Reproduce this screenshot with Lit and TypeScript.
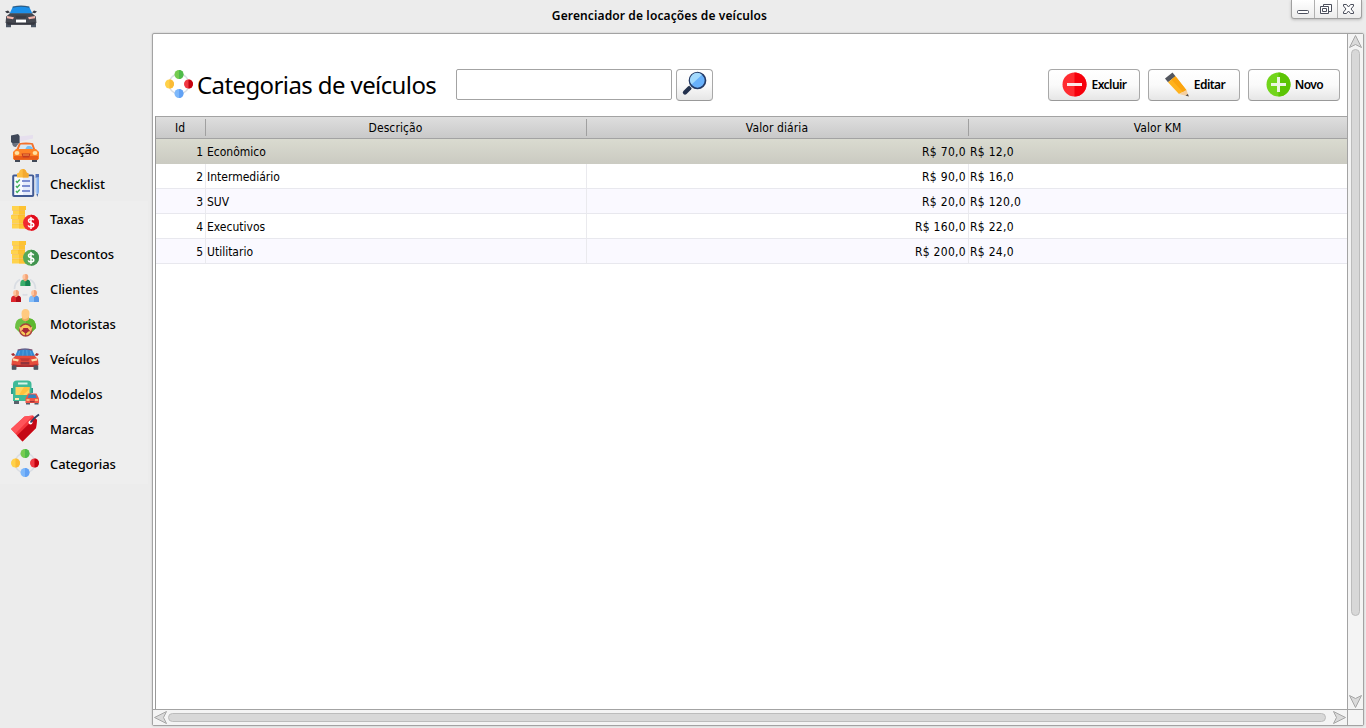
import { LitElement, html, svg, css } from "lit";
import { customElement, property } from "lit/decorators.js";

const carFront = (body: string, glass: string, dark: string, lamp: string) => svg`
  <path d="M1 20h5v6H1zM26 20h5v6h-5z" fill="#4b5563"/>
  <path d="M0 9.500l3-1 2 2.200-3 .8zM32 9.500l-3-1-2 2.200 3 .8z" fill="${dark}"/>
  <path d="M8 4.500Q16 2.600 24 4.500L27.500 12h-23z" fill="${glass}"/>
  <path d="M7.300 4.700Q16 2 24.700 4.700l-.6 1.100Q16 3.600 7.900 5.800z" fill="${dark}" opacity=".6"/>
  <path d="M5 11.400h22l3.800 3.400.6 6-1.400 2.400H2l-1.400-2.400.6-6z" fill="${body}"/>
  <path d="M1.500 20.500q14.500 2.500 29 0l-1.500 3H3z" fill="${dark}"/>
  <path d="M10 14h12l-2 3h-8z" fill="${dark}" opacity=".6"/>
  <path d="M2 14.200l7 1.300-1 2.200-6-1.200zM30 14.200l-7 1.300 1 2.200 6-1.200z" fill="${lamp}"/>`;

const coins = (c1: string, c2: string) => svg`<g transform="translate(0 2)">
  <path d="M1 0h14v4H1zM2 4.500h12v4H2zM0 9h14v4H0zM1 13.500h14v4H1zM1 18h14v4.500H1z" fill="#ffd34d"/>
  <path d="M8 0h7v4H8zM8 4.500h6v4H8zM7 9h7v4H7zM8 13.500h7v4H8zM8 18h7v4.500H8z" fill="#fdc233"/>
  <path d="M1 4h13v.7H1zM1 8.500h13v.7H1zM1 13h13v.7H1zM1 17.500h13v.7H1z" fill="#f6a623" opacity=".6"/>
  <circle cx="20" cy="16.800" r="8" fill="${c1}"/>
  <path d="M20 8.800a8 8 0 0 1 0 16z" fill="${c2}"/>
  <path d="M22.700 14.300q-.5-1.500-2.700-1.500-2.400 0-2.500 1.800 0 1.700 2.500 2.200 2.800.6 2.800 2.300 0 1.900-2.800 1.900-2.400 0-2.800-1.700M20 11v12" fill="none" stroke="#fff" stroke-width="1.500"/></g>`;

const person = (x: number, y: number, c1: string, c2: string) => svg`
  <g transform="translate(${x} ${y})">
    <path d="M0 12V9.500Q0 5.500 4 5.500h2q4 0 4 4V12z" fill="${c1}"/>
    <path d="M5 5.500h1q4 0 4 4V12H5z" fill="${c2}"/>
    <circle cx="5" cy="3" r="2.900" fill="#ffc39c"/>
    <path d="M5 .1a2.900 2.900 0 0 1 0 5.800z" fill="#f2a276"/>
    <path d="M3.500 5h3v1.600Q5 8 3.500 6.600z" fill="#f2a276"/>
  </g>`;

const icons: Record<string, unknown> = {
  appcar: svg`<g transform="translate(0 1.300) scale(1 .96)">${carFront("#454850", "#1c8fe8", "#34363f", "#f5b5ab")}<path d="M11 18h10v3H11z" fill="#fff"/></g>`,
  locacao: svg`
    <path d="M7.500 2.500L22 1v3.500l-13 3z" fill="#e6dfee"/>
    <path d="M0 1.500L7 0l1.600 2v7L2 10 0 8z" fill="#3f4858"/>
    <path d="M1 9.500q1 4 4 3.500l3-4z" fill="#69717f"/>
    <path d="M8.500 9.500h13l2.300 6H6.200z" fill="#d8e8f2"/>
    <path d="M8 9.200q7-1.300 14 0l2.200 6h-2l-1.800-4.700H9.600L7.800 15H5.600z" fill="#f4712b"/>
    <path d="M16 12.300a4.500 4.500 0 0 1 6.200 3h-8z" fill="#76bdf1"/>
    <path d="M4 24h5v4H4zM21 24h5v4h-5z" fill="#414957"/>
    <path d="M5 15h20l3 3v6.500l-1 1.300H3L2 24.500V18z" fill="#ff8427"/>
    <path d="M3 22h24v3.800H3z" fill="#e95c18"/>
    <ellipse cx="6" cy="19" rx="2.400" ry="2" fill="#ffe1a1"/><ellipse cx="24" cy="19" rx="2.400" ry="2" fill="#ffe1a1"/>
    <path d="M10.500 19.500h9l-1.300 4h-6.400z" fill="#c53b20"/><path d="M12 21h6" stroke="#f6a14a"/>`,
  checklist: svg`
    <rect x="2.200" y="6.400" width="20" height="20.600" rx=".8" fill="#f8faff" stroke="#415a93" stroke-width="2"/>
    <path d="M12 7.500h9v18.500h-9z" fill="#e6ecfb"/>
    <path d="M6 8.500V4.500L8 3.500Q8.500 0 11.700 0T15.500 3.500l2 1v4z" fill="#fdbd43"/><path d="M11.700 0Q15 0 15.500 3.500l2 1v4h-5.800z" fill="#f4a931"/>
    <path d="M5 12l1.200 1.400 2.600-2.800M5 17l1.200 1.400 2.600-2.800M5 22l1.200 1.400 2.600-2.800" fill="none" stroke="#43b05c" stroke-width="1.500"/>
    <path d="M11 12h8M11 17h8M11 22h8" stroke="#596fc3" stroke-width="1.600"/>
    <path d="M24.500 5H28v4h-3.500z" fill="#5573b8"/><path d="M24.500 8.600H28v14.200l-1.700 4.700-1.800-4.700z" fill="#a9c9f5"/><path d="M26.300 8.600H28v14.200l-1.700 4.700z" fill="#7daaea"/><path d="M25.500 25H27l-.7 3z" fill="#425b93"/>`,
  taxas: coins("#f12a31", "#e00c1c"),
  descontos: coins("#58a957", "#41944f"),
  clientes: svg`
    <path d="M3.500 15q.3-7 5.500-9.500M24.500 15q-.3-7-5.500-9.500M11.500 20.500q2.500 1 5 0" fill="none" stroke="#d9dde3" stroke-width="1.700"/>
    ${person(9.3, 0, "#3bae6b", "#168451")}${person(0, 16, "#dd252c", "#ad0d19")}${person(18, 16, "#83bdf9", "#5896e5")}`,
  motoristas: svg`
    <path d="M4 19q0-9.500 6.500-9.800h7Q25 9.500 25 19l-4 4H8z" fill="#6cc043"/>
    <path d="M15 9.200h3Q25 9.500 25 19l-4 4h-6z" fill="#5cb82f"/>
    <path d="M11 7h7v3.500Q14.500 14 11 10.500z" fill="#efac62"/>
    <path d="M10.500 4.500Q10.500 0 14.500 0t4 4.500T14.500 10t-4-5.500z" fill="#ffca80"/>
    <circle cx="14.700" cy="21" r="6" fill="#f7c957" stroke="#a9403b" stroke-width="1.400"/>
    <path d="M12.500 19.500h4.400l.8 2.500-3 2-3-2zM14.700 23v4M12 21.500l-3 .8M17.500 21.500l3 .8" fill="#a92738" stroke="#a92738" stroke-width="1"/>
    <path d="M8 17.500l4 2-2.500 3.500zM21.500 17.500l-4 2 2.500 3.500z" fill="#fbb572"/>`,
  veiculos: svg`<g transform="translate(0 1.300) scale(.875 .92)">${carFront("#e64c3c", "#3487cf", "#a92d31", "#ffe0aa")}
    <path d="M1 22h5v4.500H1zM26 22h5v4.500h-5z" fill="#505661"/><path d="M11 18h10v3H11z" fill="#93333b"/>
    <path d="M10 6l-1.500 5M14 5.200l-.5 6M18 5.200l.5 6M22 6l1.500 5" stroke="#66b3e8" stroke-width=".7"/></g>`,
  modelos: svg`<g transform="translate(0 1)">
    <path d="M3 20h5v4H3z" fill="#59616b"/>
    <path d="M0 8h3v6H0zM19 8h3v5h-3z" fill="#2c9d8a"/>
    <path d="M2 4q0-3.500 4-3.500h10.500q4 0 4 3.500v17H2z" fill="#3fba98"/>
    <path d="M4.500 7h14v8h-14z" fill="#ffd460"/><path d="M13 7h5.500v2L12 15H8z" fill="#ffc13d"/>
    <path d="M7 2.500h9.500v2H7z" fill="#d7f4e8"/><path d="M4 18h4v2H4z" fill="#ffeab1"/>
    <path d="M15 21h4v3.500h-4zM23.500 21h4v3.500h-4z" fill="#535b69"/>
    <path d="M17 13.500h8.500l2.500 5V23H14.500v-4.500z" fill="#ef5647"/><path d="M18 14.500h6.500l1.300 3.500h-9.200z" fill="#3385be"/>
    <path d="M15.500 19.200h3v1.500h-3zM24 19.200h3v1.500h-3z" fill="#ffd88b"/><path d="M19 21h4.500v1.300H19z" fill="#9f3138"/></g>`,
  marcas: svg`
    <path d="M0 15L13.500 2.500l8.500-1L26 6l-1 8L11.500 27.500z" fill="#f4363c"/>
    <path d="M6 21.500L24 4l2 2-1 8-13.500 13.500z" fill="#c50816"/>
    <path d="M0 15L13.500 2.500l8.500-1L4.500 19.500z" fill="#ff545a"/>
    <circle cx="19.500" cy="8.500" r="2" fill="#fff"/>
    <path d="M19.500 8.500l4-4.500L28 .5" fill="none" stroke="#304064" stroke-width="1.800"/>`,
  categorias: svg`
    <circle cx="14" cy="14" r="10" fill="none" stroke="#d9dde3" stroke-width="1.300"/>
    <circle cx="14" cy="4.500" r="4.500" fill="#74cc50"/><path d="M14 0a4.500 4.500 0 0 1 0 9z" fill="#4fbb4a"/>
    <circle cx="4.500" cy="14" r="4.500" fill="#ffd149"/><path d="M4.500 9.500a4.500 4.500 0 0 1 0 9z" fill="#fbbb35"/>
    <circle cx="23.500" cy="14" r="4.500" fill="#f03842"/><path d="M23.500 9.500a4.500 4.500 0 0 1 0 9z" fill="#c40310"/>
    <circle cx="14" cy="23.500" r="4.500" fill="#7db8fb"/><path d="M14 19a4.500 4.500 0 0 1 0 9z" fill="#62a2f5"/>`,
};

@customElement("app-icon")
class AppIcon extends LitElement {
  @property() name = "";
  static styles = css`
    :host { display: block; width: 28px; height: 28px; flex: none; }
    svg { display: block; width: 100%; height: 100%; overflow: visible; }
  `;
  render() {
    return html`<svg viewBox=${this.name === "appcar" ? "0 0 32 28" : "0 0 28 28"}>${icons[this.name]}</svg>`;
  }
}

const menu: [string, string][] = [
  ["locacao", "Locação"], ["checklist", "Checklist"], ["taxas", "Taxas"], ["descontos", "Descontos"],
  ["clientes", "Clientes"], ["motoristas", "Motoristas"], ["veiculos", "Veículos"],
  ["modelos", "Modelos"], ["marcas", "Marcas"], ["categorias", "Categorias"],
];
const rows = [
  ["1", "Econômico", "R$ 70,0", "R$ 12,0"],
  ["2", "Intermediário", "R$ 90,0", "R$ 16,0"],
  ["3", "SUV", "R$ 20,0", "R$ 120,0"],
  ["4", "Executivos", "R$ 160,0", "R$ 22,0"],
  ["5", "Utilitario", "R$ 200,0", "R$ 24,0"],
];

@customElement("app-root")
class AppRoot extends LitElement {
  static styles = css`
    :host { display: block; width: 1366px; height: 728px; overflow: hidden; background: #ececec; color: #000; font-family: "Noto Sans", "Open Sans", sans-serif; }
    * { box-sizing: border-box; }
    .window { display: grid; grid-template: 33px 695px / 152px 1214px; height: 728px; }
    .titlebar { grid-column: 1 / 3; display: grid; grid-template-columns: 300px 1fr 300px; }
    .appicon { width: 32px; height: 28px; margin: 1px 0 0 5px; }
    .title { text-align: center; font-size: 12px; font-weight: 600; letter-spacing: .12px; line-height: 31px; padding-right: 47px; white-space: nowrap; }
    .controls { justify-self: end; display: flex; width: 71px; height: 19px; margin-right: 4px; border: 1px solid #a0a0a0; border-top: 0; border-radius: 0 0 3px 3px; background: linear-gradient(#fff, #ececec); box-shadow: 0 1px 3px #bbb; }
    .ctl { width: 23px; border-right: 1px solid #b0b0b0; }
    .ctl:last-child { border: 0; }
    .ctl svg { display: block; width: 23px; height: 18px; }
    .side { padding-top: 98px; }
    .item { display: flex; height: 35px; width: 148px; padding: 3px 0 0 11px; font-size: 13px; font-weight: 500; letter-spacing: -.12px; }
    .item span { margin-left: 11px; line-height: 30px; white-space: nowrap; }
    .item.lit { background: #eee; }
    .item:last-child { height: 38px; }
    .panel { width: 1212px; height: 693px; border: 1px solid #a3a3a3; border-radius: 2px; background: #fff; display: grid; grid-template: 675px 16px / 1194px 16px; box-shadow: 0 0 2px #bbb; }
    .content { padding-left: 2px; display: flex; flex-direction: column; }
    .tools { height: 82px; display: flex; padding: 35px 7px 0 10px; align-items: flex-start; }
    .tools app-icon { margin-top: 1px; }
    .heading { font-size: 24px; letter-spacing: -.6px; line-height: 33px; margin: -1px 0 0 4px; width: 259px; white-space: nowrap; font-weight: 400; }
    .search { width: 216px; height: 31px; margin: 0 4px 0 0; border: 1px solid #a3a3a3; border-radius: 2px; background: #fff; outline: 0; }
    button { height: 32px; margin: 0; padding: 0; border: 1px solid #a8a8a8; border-bottom-color: #999; border-radius: 4px; background: linear-gradient(#fff, #fafafa 50%, #e6e6e6); display: flex; align-items: center; justify-content: center; font: 600 12px/16px "Noto Sans", sans-serif; letter-spacing: -.55px; color: #000; }
    .find { width: 37px; }
    .find svg { margin: -3px 1px 0 0; }
    .actions { margin-left: auto; display: flex; gap: 8px; }
    .actions button { width: 92px; gap: 4px; padding: 0 0 1px 1px; }
    .actions svg { flex: none; margin-top: -1px; }
    .table { border-left: 1px solid #999; height: 593px; font-family: "DejaVu Sans Condensed", "DejaVu Sans", sans-serif; font-stretch: condensed; font-size: 12px; }
    .tr { display: grid; grid-template-columns: 50px 381px 382px 1fr; height: 25px; line-height: 26px; background: #fff; border-bottom: 1px solid #e8e8ee; }
    .tr.even { background: #faf9ff; }
    .tr.sel { background: linear-gradient(#dadbd0, #cbcbc2); border-color: #cbcbc2; }
    .td { height: 24px; padding: 0 2px 0 1px; border-right: 1px solid #eaeaee; white-space: nowrap; }
    .sel .td { border-color: transparent; }
    .td:last-child { border: 0; }
    .num { text-align: right; }
    .money { letter-spacing: .3px; }
    .head { height: 23px; background: linear-gradient(#dedede, #c9c9c9); border-top: 1px solid #a3a3a3; border-bottom: 1px solid #a3a3a3; }
    .head .td { height: 17px; margin: 2px 0; line-height: 19px; letter-spacing: .1px; text-align: center; border-color: #a0a0a0; }
    .vbar { border-left: 1px solid #a3a3a3; background: #f4f4f4; display: flex; flex-direction: column; align-items: center; }
    .vbar i { width: 9px; height: 567px; border: 1px solid #bcbcbc; border-radius: 5px; background: #d8d8d8; }
    .hbar { border-top: 1px solid #a3a3a3; background: #f4f4f4; display: flex; align-items: center; }
    .hbar i { width: 1158px; height: 9px; border: 1px solid #bcbcbc; border-radius: 5px; background: #d8d8d8; }
    .corner { border: solid #a3a3a3; border-width: 1px 0 0 1px; background: #f4f4f4; }
    .grow { flex: 1; }
    .arrow { display: block; flex: none; fill: #dadada; stroke: #a6a6a6; }
  `;
  render() {
    return html`<div class="window">
      <div class="titlebar">
        <app-icon class="appicon" name="appcar"></app-icon>
        <div class="title">Gerenciador de locações de veículos</div>
        <div class="controls">
          <div class="ctl"><svg viewBox="0 0 23 18" fill="#fff" stroke="#4b4f5c"><rect x="5.500" y="10.500" width="11" height="3" rx="1"/></svg></div>
          <div class="ctl"><svg viewBox="0 0 23 18" fill="#fff" stroke="#4b4f5c"><path d="M8.500 4.500h8v7h-8z"/><path d="M5.500 6.500h8v7h-8z"/><path d="M7.500 8.500h4v3h-4z"/></svg></div>
          <div class="ctl"><svg viewBox="0 0 23 18" fill="#fff" stroke="#4b4f5c"><path d="M5.500 4.500h3l2 2.500 2-2.500h3v1.500l-2.500 3 2.500 3v1.500h-3l-2-2.500-2 2.500h-3V12L8 9 5.500 6z"/></svg></div>
        </div>
      </div>
      <nav class="side">${menu.map(([i, t], n) => html`<div class="item ${n > 1 ? "lit" : ""}"><app-icon name=${i}></app-icon><span>${t}</span></div>`)}</nav>
      <main class="panel">
        <section class="content">
          <div class="tools">
            <app-icon name="categorias"></app-icon>
            <div class="heading">Categorias de veículos</div>
            <input class="search" aria-label="Pesquisar">
            <button class="find" aria-label="Pesquisar"><svg width="26" height="26" viewBox="0 0 26 26"><path d="M8.500 17L4 21.500" stroke="#23314d" stroke-width="4.400" stroke-linecap="round"/><path d="M8.500 15l2.500 2.500 2.500-2.500L11 12.500z" fill="#dde4ee"/><circle cx="16.500" cy="9.500" r="8" fill="#68b1fb" stroke="#243a66" stroke-width="1.700"/><path d="M10.500 13.500a7.200 7.200 0 0 1 10.500-9.800z" fill="#a3dafd"/></svg></button>
            <div class="actions">
              <button><svg width="25" height="25" viewBox="0 0 25 25"><circle cx="12.500" cy="12.500" r="12" fill="#ff2c31"/><path d="M12.500.5a12 12 0 0 1 0 24z" fill="#f6000c"/><path d="M5 12.500h15" stroke="#fde8e8" stroke-width="3"/></svg>Excluir</button>
              <button><svg width="26" height="25" viewBox="0 0 26 25"><path d="M1 6.500L8.500.5l3 3.700-7.500 6z" fill="#53565e"/><path d="M4 10.200l7.500-6 11 14-7.500 3.800z" fill="#ffb21d"/><path d="M7.500 7.400l4-3.200 11 14-3.500 2z" fill="#fba40f"/><path d="M15 22l7.500-4 2.300 6.500z" fill="#f5cf9f"/><path d="M21.500 23.500l2.400-1.600.9 2.700z" fill="#4c4c52"/></svg>Editar</button>
              <button><svg width="25" height="25" viewBox="0 0 25 25"><circle cx="12.500" cy="12.500" r="12" fill="#72d51b"/><path d="M12.500.5a12 12 0 0 1 0 24z" fill="#5cc405"/><path d="M5 12.500h15M12.500 5v15" stroke="#e9f5e0" stroke-width="3"/></svg>Novo</button>
            </div>
          </div>
          <div class="table">
            <div class="tr head">${["Id", "Descrição", "Valor diária", "Valor KM"].map(t => html`<div class="td">${t}</div>`)}</div>
            ${rows.map((r, n) => html`<div class="tr ${n === 0 ? "sel" : n % 2 === 0 ? "even" : ""}">${r.map((t, c) => html`<div class="td ${c === 0 || c === 2 ? "num" : ""} ${c > 1 ? "money" : ""}">${t}</div>`)}</div>`)}
          </div>
        </section>
        <div class="vbar"><svg class="arrow" width="15" height="15"><path d="M7.500 1.500l6 12-6-3-6 3z"/></svg><i></i><span class="grow"></span><svg class="arrow" width="15" height="15"><path d="M7.500 13.500l6-12-6 3-6-3z"/></svg></div>
        <div class="hbar"><svg class="arrow" width="15" height="15"><path d="M1.500 7.500l12-6-3 6 3 6z"/></svg><i></i><span class="grow"></span><svg class="arrow" width="15" height="15"><path d="M13.500 7.500l-12-6 3 6-3 6z"/></svg></div>
        <div class="corner"></div>
      </main>
    </div>`;
  }
}
